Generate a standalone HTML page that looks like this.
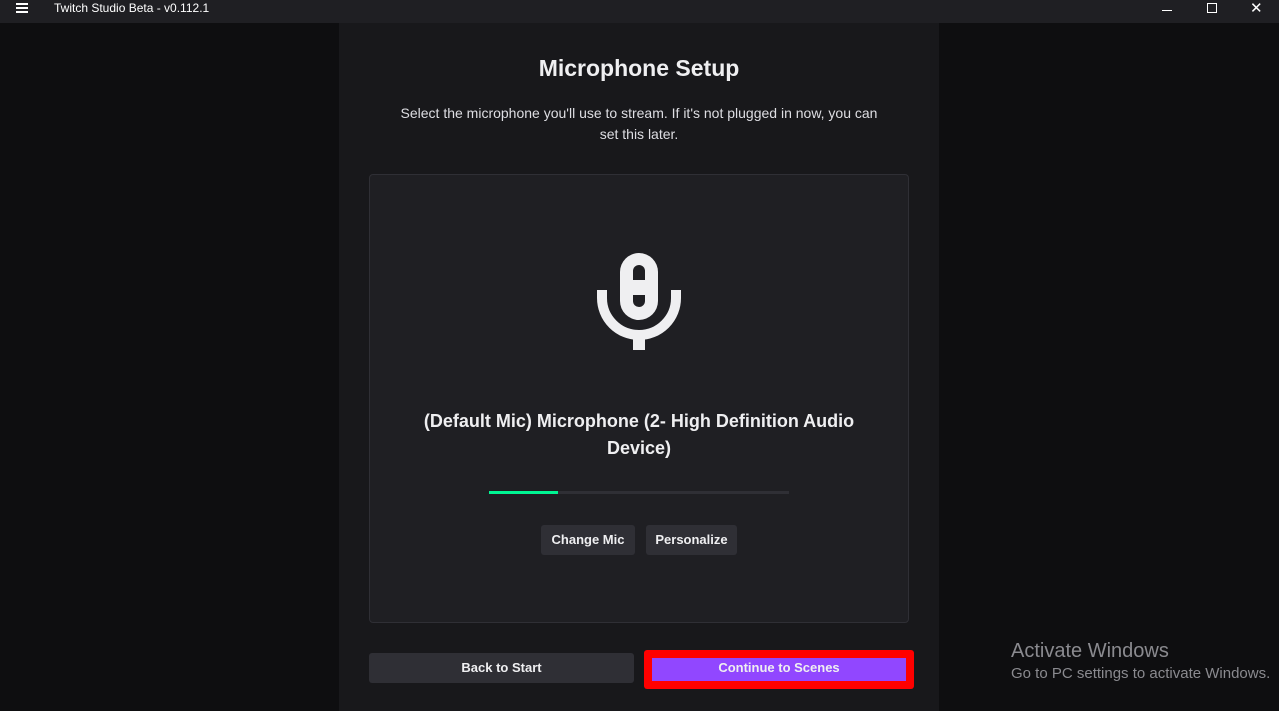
<!DOCTYPE html>
<html><head><style>
*{margin:0;padding:0;box-sizing:border-box}
body{width:1279px;height:711px;background:#0e0e10;font-family:"Liberation Sans",sans-serif;position:relative;overflow:hidden;color:#efeff1}
.tb{position:absolute;left:0;top:0;width:1279px;height:23px;background:#1f1f23}
.abs{position:absolute}
.panel{left:339px;top:23px;width:600px;height:688px;background:#18181b}
.card{left:369px;top:174px;width:540px;height:449px;background:#1f1f23;border:1px solid #2f2f35;border-radius:4px}
.btn{background:#2f2f35;border-radius:3px;font-weight:bold;font-size:13px;text-align:center;color:#efeff1}
</style></head><body>
<div class="tb">
<div class="abs" style="left:16px;top:3px;width:12px;height:2px;background:#fff;box-shadow:0 4px 0 #fff,0 8px 0 #fff"></div>
<div class="abs" style="left:54px;top:1px;font-size:12px;color:#fff">Twitch Studio Beta - v0.112.1</div>
<div class="abs" style="left:1162px;top:10px;width:10px;height:1px;background:#fff"></div>
<div class="abs" style="left:1207px;top:3px;width:10px;height:10px;border:1px solid #fff"></div>
<div class="abs" style="left:1250px;top:-1px;font-size:15px;color:#fff">✕</div>
</div>
<div class="abs panel"></div>
<div class="abs" style="left:339px;top:55px;width:600px;text-align:center;font-size:23px;font-weight:bold">Microphone Setup</div>
<div class="abs" style="left:394px;top:103px;width:490px;text-align:center;font-size:14px;line-height:21px;color:#dedee3">Select the microphone you'll use to stream. If it's not plugged in now, you can set this later.</div>
<div class="abs card"></div>
<svg class="abs" style="left:590px;top:250px" width="100" height="105" viewBox="590 250 100 105">
<rect x="620" y="253" width="38" height="67" rx="19" fill="#efeff1"/>
<rect x="633" y="265" width="12" height="42" rx="6" fill="#1f1f23"/>
<rect x="633" y="280" width="12" height="15" fill="#efeff1"/>
<path d="M602 290 L602 298 A37 37 0 0 0 676 298 L676 290" stroke="#efeff1" stroke-width="10" fill="none"/>
<rect x="633" y="333" width="12" height="17" fill="#efeff1"/>
</svg>
<div class="abs" style="left:409px;top:408px;width:460px;text-align:center;font-size:18px;font-weight:bold;line-height:27px">(Default Mic) Microphone (2- High Definition Audio Device)</div>
<div class="abs" style="left:489px;top:491px;width:300px;height:3px;background:#2f2f35"></div>
<div class="abs" style="left:489px;top:491px;width:69px;height:3px;background:#00f593"></div>
<div class="abs btn" style="left:541px;top:525px;width:94px;height:30px;line-height:30px">Change Mic</div>
<div class="abs btn" style="left:646px;top:525px;width:91px;height:30px;line-height:30px">Personalize</div>
<div class="abs btn" style="left:369px;top:653px;width:265px;height:30px;line-height:30px">Back to Start</div>
<div class="abs" style="left:644px;top:650px;width:270px;height:39px;background:#f00;border-radius:3px"></div>
<div class="abs btn" style="left:652px;top:658px;width:254px;height:23px;line-height:19px;background:#9147ff;border-radius:0">Continue to Scenes</div>
<div class="abs" style="left:1011px;top:640px;font-size:20px;color:#8a8a8f">Activate Windows</div>
<div class="abs" style="left:1011px;top:665px;font-size:15px;color:#8a8a8f">Go to PC settings to activate Windows.</div>
</body></html>
